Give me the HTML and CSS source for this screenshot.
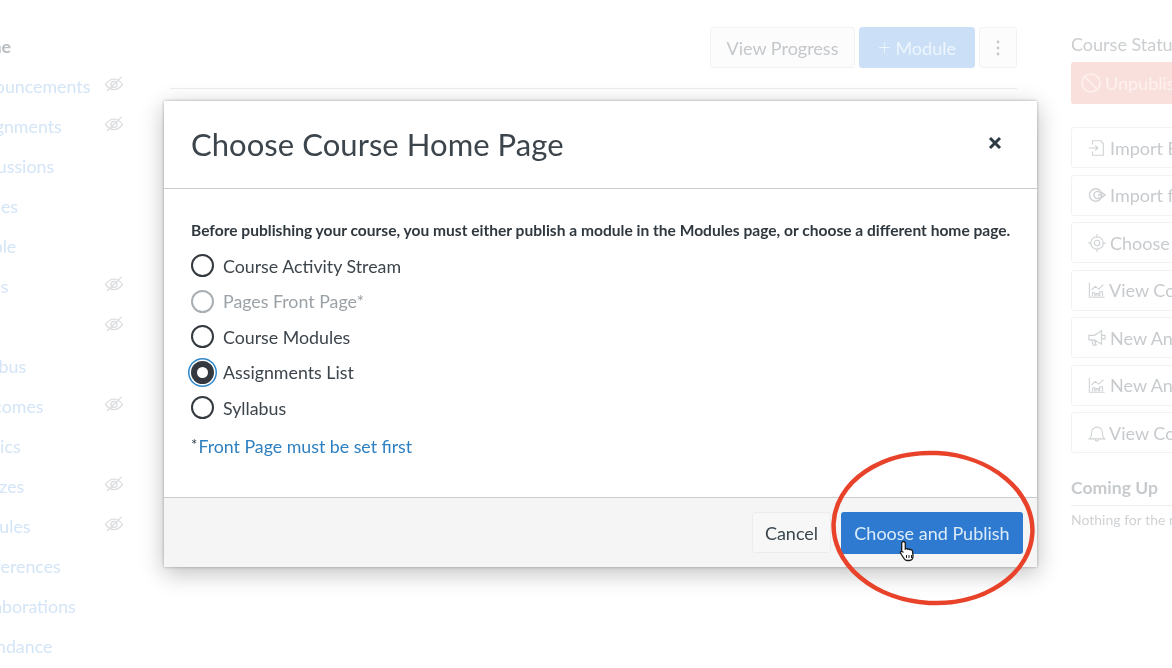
FILE: index.html
```html
<!DOCTYPE html>
<html lang="en">
<head>
<meta charset="utf-8">
<title>Choose Course Home Page</title>
<link rel="stylesheet" href="styles.css">
</head>
<body>
<svg class="defs" width="0" height="0" aria-hidden="true">
  <symbol id="eye" viewBox="0 0 20 20"><path d="M1.500 10.500C4 6.800 7 5.200 10 5.200s6 1.600 8.500 5.300C16 14 13 15.600 10 15.600S4 14 1.500 10.500Z" fill="none" stroke="currentColor" stroke-width="1.300"/><circle cx="10" cy="10.400" r="3" fill="none" stroke="currentColor" stroke-width="1.300"/><path d="M3 17 17.500 3" stroke="currentColor" stroke-width="1.300"/></symbol>
  <symbol id="chart" viewBox="0 0 20 20"><path d="M1.500 2v16h17M4 10l4-4 4 3 5-5M5 17v-4h2.500v4M9 17v-3h2.500v3M13 17v-5h3v5" fill="none" stroke="currentColor" stroke-width="1.200"/></symbol>
</svg>
<div class="page">
  <nav class="side">
    <div class="nav-row"><span class="nav-home">Home</span></div>
    <div class="nav-row"><a>Announcements</a><svg class="eye"><use href="#eye"/></svg></div>
    <div class="nav-row"><a>Assignments</a><svg class="eye"><use href="#eye"/></svg></div>
    <div class="nav-row"><a>Discussions</a></div>
    <div class="nav-row"><a>Grades</a></div>
    <div class="nav-row"><a>People</a></div>
    <div class="nav-row"><a>Pages</a><svg class="eye"><use href="#eye"/></svg></div>
    <div class="nav-row"><a>Files</a><svg class="eye"><use href="#eye"/></svg></div>
    <div class="nav-row"><a>Syllabus</a></div>
    <div class="nav-row"><a>Outcomes</a><svg class="eye"><use href="#eye"/></svg></div>
    <div class="nav-row"><a>Rubrics</a></div>
    <div class="nav-row"><a>Quizzes</a><svg class="eye"><use href="#eye"/></svg></div>
    <div class="nav-row"><a>Modules</a><svg class="eye"><use href="#eye"/></svg></div>
    <div class="nav-row"><a>Conferences</a></div>
    <div class="nav-row"><a>Collaborations</a></div>
    <div class="nav-row"><a>Attendance</a></div>
  </nav>
  <main class="main">
    <div class="toolbar">
      <button class="btn view">View Progress</button>
      <button class="btn add"><span class="plus">+</span> Module</button>
      <button class="btn more"><svg width="4" height="16" viewBox="0 0 4 16"><circle cx="2" cy="2" r="1.400"/><circle cx="2" cy="8" r="1.400"/><circle cx="2" cy="14" r="1.400"/></svg></button>
    </div>
    <hr class="rule">
  </main>
  <aside class="status">
    <h2 class="status-title">Course Status</h2>
    <button class="unpublish"><svg width="22" height="22" viewBox="0 0 22 22"><circle cx="11" cy="11" r="9" fill="none" stroke="currentColor" stroke-width="1.500"/><path d="M5 5l12 12" stroke="currentColor" stroke-width="1.500"/></svg>Unpublished</button>
    <div class="actions">
      <button class="act"><svg class="ico" viewBox="0 0 20 20"><path d="M5 6V2h9l3 3v13H5v-4M1 10h10M8 7l3 3-3 3" fill="none" stroke="currentColor" stroke-width="1.200"/></svg>Import Existing Content</button>
      <button class="act"><svg class="ico" viewBox="0 0 20 20"><path d="M14 5.500A7 7 0 1 0 14 14.500M14 8A4 4 0 1 0 14 12M11 10h4V7l4 3-4 3v-3" fill="none" stroke="currentColor" stroke-width="1.600"/></svg>Import from Commons</button>
      <button class="act"><svg class="ico" viewBox="0 0 20 20"><circle cx="10" cy="10" r="7" fill="none" stroke="currentColor" stroke-width="1.200"/><circle cx="10" cy="10" r="3" fill="none" stroke="currentColor" stroke-width="1.200"/><path d="M10 0v4M10 16v4M0 10h4M16 10h4" stroke="currentColor" stroke-width="1.200"/></svg>Choose Home Page</button>
      <button class="act tight"><svg class="ico"><use href="#chart"/></svg>View Course Stream</button>
      <button class="act"><svg class="ico" viewBox="0 0 20 20"><path d="M1 7h6l8-5v15l-8-5H1ZM4 12l2 6h3l-2-6M15 7h4v4h-4" fill="none" stroke="currentColor" stroke-width="1.300"/></svg>New Announcement</button>
      <button class="act"><svg class="ico"><use href="#chart"/></svg>New Analytics</button>
      <button class="act tight"><svg class="ico" viewBox="0 0 20 20"><path d="M1.500 16.500c2-1.500 2.500-3 2.500-7a6 6 0 0 1 12 0c0 4 .5 5.500 2.500 7ZM8 17a2 2 0 0 0 4 0" fill="none" stroke="currentColor" stroke-width="1.200"/></svg>View Course Notifications</button>
    </div>
    <h2 class="coming">Coming Up</h2>
    <p class="nothing">Nothing for the next week</p>
  </aside>
</div>

<section class="modal">
  <header class="modal-head">
    <h1 class="modal-title">Choose Course Home Page</h1>
    <svg class="close" width="14" height="14" viewBox="0 0 14 14"><path d="M2 2l10 10M12 2L2 12" stroke="#2d3b45" stroke-width="3"/></svg>
  </header>
  <div class="modal-body">
    <p class="lead">Before publishing your course, you must either publish a module in the Modules page, or choose a different home page.</p>
    <ul class="options">
      <li class="option"><span class="radio"></span>Course Activity Stream</li>
      <li class="option off"><span class="radio"></span>Pages Front Page*</li>
      <li class="option"><span class="radio"></span>Course Modules</li>
      <li class="option on"><span class="radio"></span>Assignments List</li>
      <li class="option"><span class="radio"></span>Syllabus</li>
    </ul>
    <p class="note"><sup class="star">*</sup><a class="note-link">Front Page must be set first</a></p>
  </div>
  <footer class="modal-foot">
    <button class="cancel">Cancel</button>
    <button class="publish">Choose and Publish</button>
  </footer>
</section>

<svg class="ring" width="210" height="162" viewBox="0 0 210 162"><ellipse cx="105" cy="81" rx="99.500" ry="75" fill="none" stroke="#e8432a" stroke-width="4.500" transform="rotate(3 105 81)"/></svg>
<svg class="cursor" width="18" height="22" viewBox="0 0 18 22"><path d="M4.500 1.500c1.300 0 1.800.8 1.800 2v5.500c.8-.6 2-.5 2.500.3.800-.5 1.900-.3 2.400.5.900-.4 2.100 0 2.300 1.200l.5 5c0 2.500-1.500 4.500-3.800 4.500H8c-1.500 0-2.300-.8-3-2L1.500 13c-.6-1.100 1-2.300 2-1.300l-.8-.1V3.500c0-1.200.6-2 1.800-2Z" fill="#fff" stroke="#1c1c1c" stroke-width="1.300"/><path d="M7.500 15v3M10 15v3M12.500 15v3" stroke="#1c1c1c"/></svg>
</body>
</html>
```
FILE: styles.css
```css
* { box-sizing: border-box; }
html, body { margin: 0; height: 100%; }
body {
  position: relative;
  width: 1172px;
  height: 668px;
  overflow: hidden;
  background: #fff;
  font-family: Lato, "Open Sans", sans-serif;
  color: #2d3b45;
}
.defs { position: absolute; }
button { font-family: inherit; cursor: default; }

/* blurred page behind the dialog */
.page {
  display: flex;
  width: 1172px;
  height: 668px;
  overflow: hidden;
  filter: blur(0.6px);
}
.side {
  flex: none;
  width: 161px;
  margin-left: -37px;
  padding-top: 26px;
  font-size: 17.800px;
}
.nav-row {
  display: flex;
  align-items: center;
  justify-content: space-between;
  height: 40px;
  color: #d4e5f7;
}
.nav-home { color: #b9bdc1; font-weight: 700; }
.eye { width: 20px; height: 20px; margin-top: -4px; color: #dcdee0; }

.main { flex: none; width: 847px; margin-left: 46px; padding-top: 27px; }
.toolbar { display: flex; justify-content: flex-end; gap: 4px; }
.btn {
  height: 41px;
  border: 1px solid #f2f2f2;
  border-radius: 3px;
  background: #fcfcfc;
  color: #c4c8cb;
  font-size: 18px;
  padding: 0;
}
.view { width: 145px; }
.add { width: 116px; background: #cbe0f6; border-color: #cbe0f6; color: #eef5fc; }
.plus { font-size: 22px; font-weight: 300; line-height: 0; }
.more { width: 38px; display: flex; align-items: center; justify-content: center; fill: #c4c8cb; }
.rule { margin: 20px 0 0; border: 0; border-top: 1px solid #eeeeee; }

.status { flex: none; width: 240px; margin-left: 54px; padding-top: 33px; }
.status-title { margin: 0; height: 29px; font-size: 18px; line-height: 22px; font-weight: 400; color: #cbced0; }
.unpublish {
  display: flex;
  align-items: center;
  gap: 3px;
  width: 100%;
  height: 42px;
  padding: 0 0 0 9px;
  border: 0;
  border-radius: 3px;
  background: #fae0dc;
  color: #fdf1ef;
  font-size: 18px;
  text-align: left;
}
.actions { display: flex; flex-direction: column; gap: 6.500px; margin-top: 23px; }
.act {
  display: flex;
  align-items: center;
  gap: 4px;
  height: 41px;
  padding: 0 0 0 16px;
  border: 1px solid #f2f2f2;
  border-radius: 3px;
  background: #fff;
  color: #c8cbce;
  font-size: 18px;
  white-space: nowrap;
}
.tight { gap: 3px; }
.ico { flex: none; width: 18px; height: 18px; color: #cfd2d4; }
.coming { margin: 24px 0 0; padding-bottom: 6px; font-size: 17.600px; line-height: 22px; font-weight: 700; color: #c8cbce; border-bottom: 1px solid #eeeeee; }
.nothing { margin: 5px 0 0; font-size: 14px; line-height: 18px; color: #cfd2d4; white-space: nowrap; }

/* dialog */
.modal {
  position: absolute;
  left: 164px;
  top: 101px;
  display: flex;
  flex-direction: column;
  width: 873px;
  height: 466px;
  background: #fff;
  box-shadow: 0 0 3px rgba(0,0,0,.3), 0 6px 22px rgba(0,0,0,.26);
  filter: blur(0.35px);
}
.modal-head {
  display: flex;
  align-items: center;
  justify-content: space-between;
  height: 88px;
  padding: 0 35px 0 27px;
  border-bottom: 1px solid #c7cdd1;
}
.modal-title { margin: -2px 0 0; font-size: 31px; font-weight: 400; line-height: 38px; color: #3d454c; letter-spacing: .05px; }
.close { margin-top: -3px; }
.modal-body { flex: 1; padding: 0 27px; }
.lead { margin: 31px 0 0; font-size: 15.570px; line-height: 20px; font-weight: 700; color: #30383f; white-space: nowrap; }
.options { margin: 8px 0 0; padding: 0; list-style: none; }
.option {
  display: flex;
  align-items: center;
  gap: 9px;
  height: 35.500px;
  font-size: 17.800px;
  color: #3d454c;
}
.radio {
  flex: none;
  position: relative;
  width: 23px;
  height: 23px;
  border: 2.500px solid #33393f;
  border-radius: 50%;
  background: #fff;
}
.off { color: #9ba2a7; }
.off .radio { border-color: #a9afb3; border-width: 2px; }
.on .radio {
  border: 6.500px solid #33393f;
  box-shadow: 0 0 0 1.500px #fff, 0 0 0 3px #2f86c9;
}
.note { margin: 8px 0 0; font-size: 17.750px; line-height: 24px; color: #36424b; }
.star { font-size: 15px; line-height: 0; vertical-align: 3px; margin-right: 1px; }
.note-link { color: #2f80c0; }
.modal-foot {
  display: flex;
  align-items: center;
  justify-content: flex-end;
  gap: 10px;
  height: 70px;
  padding: 0 14px 0 0;
  background: #f5f5f5;
  border-top: 1px solid #c7cdd1;
}
.cancel {
  width: 79px;
  height: 41px;
  border: 1px solid #ececec;
  border-radius: 3px;
  background: #f7f7f7;
  color: #3a464e;
  font-size: 18px;
  padding: 0;
}
.publish {
  width: 182px;
  height: 42px;
  border: 0;
  border-radius: 3px;
  background: #2d7ad0;
  color: #dcebf8;
  font-size: 18px;
  padding: 0;
}
.ring { position: absolute; left: 828px; top: 447px; filter: blur(0.35px); }
.cursor { position: absolute; left: 899px; top: 540px; filter: blur(0.35px); }
```
